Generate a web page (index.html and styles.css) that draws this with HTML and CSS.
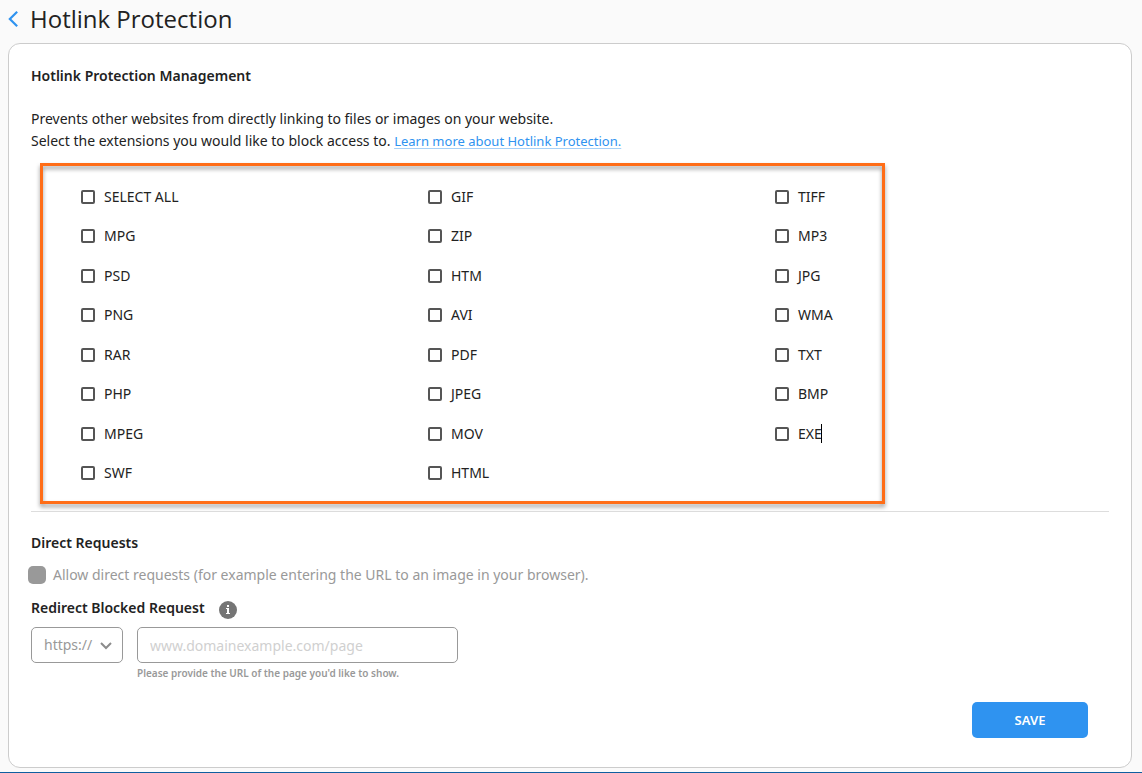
FILE: index.html
```
<!DOCTYPE html>
<html lang="en">
<head>
    <meta charset="UTF-8">
    <meta name="viewport" content="width=device-width, initial-scale=1.0">
    <title>Hotlink Protection</title>
    <link rel="stylesheet" href="styles.css">
</head>
<body>
    <header class="page-header">
        <a href="#" class="back-link" aria-label="Back">
            <svg width="12" height="18" viewBox="0 0 12 18" fill="none" stroke="#2f93f0" stroke-width="2.4">
                <path d="M10 1L2 9L10 17"/>
            </svg>
        </a>
        <h1>Hotlink Protection</h1>
    </header>

    <main class="card">
        <h2>Hotlink Protection Management</h2>
        <p class="intro">
            Prevents other websites from directly linking to files or images on your website.<br>
            Select the extensions you would like to block access to.
            <a href="#" class="learn-more">Learn more about Hotlink Protection.</a>
        </p>

        <div class="extensions">
            <div class="extension-grid">
                <label><input type="checkbox"> SELECT ALL</label>
                <label><input type="checkbox"> GIF</label>
                <label><input type="checkbox"> TIFF</label>
                <label><input type="checkbox"> MPG</label>
                <label><input type="checkbox"> ZIP</label>
                <label><input type="checkbox"> MP3</label>
                <label><input type="checkbox"> PSD</label>
                <label><input type="checkbox"> HTM</label>
                <label><input type="checkbox"> JPG</label>
                <label><input type="checkbox"> PNG</label>
                <label><input type="checkbox"> AVI</label>
                <label><input type="checkbox"> WMA</label>
                <label><input type="checkbox"> RAR</label>
                <label><input type="checkbox"> PDF</label>
                <label><input type="checkbox"> TXT</label>
                <label><input type="checkbox"> PHP</label>
                <label><input type="checkbox"> JPEG</label>
                <label><input type="checkbox"> BMP</label>
                <label><input type="checkbox"> MPEG</label>
                <label><input type="checkbox"> MOV</label>
                <label><input type="checkbox"> <span class="with-caret">EXE</span></label>
                <label><input type="checkbox"> SWF</label>
                <label><input type="checkbox"> HTML</label>
            </div>
            <div class="highlight"></div>
        </div>

        <section class="requests">
            <h2>Direct Requests</h2>
            <label class="direct">
                <input type="checkbox" disabled>
                Allow direct requests (for example entering the URL to an image in your browser).
            </label>

            <div class="redirect-title">
                <h2>Redirect Blocked Request</h2>
                <svg width="18" height="18" viewBox="0 0 18 18">
                    <circle cx="9" cy="9" r="9" fill="#757575"/>
                    <path d="M8 4h2v2H8zM7 7h3v5h1v1H7v-1h1V8H7z" fill="#fff"/>
                </svg>
            </div>

            <div class="redirect-row">
                <div class="protocol">
                    <select aria-label="Protocol" disabled>
                        <option>https://</option>
                    </select>
                    <svg width="12" height="8" viewBox="0 0 12 8" fill="none" stroke="#8c8c8c" stroke-width="2">
                        <path d="M1 1L6 6L11 1"/>
                    </svg>
                </div>
                <div class="url-field">
                    <input type="text" aria-label="Redirect URL" aria-describedby="urlHint" placeholder="www.domainexample.com/page" disabled>
                    <p id="urlHint">Please provide the URL of the page you'd like to show.</p>
                </div>
            </div>
        </section>

        <div class="actions">
            <button type="submit">SAVE</button>
        </div>
    </main>
</body>
</html>
```
FILE: styles.css
```
* {
    margin: 0;
    padding: 0;
    box-sizing: border-box;
}

body {
    min-height: 100vh;
    display: flex;
    flex-direction: column;
    background-color: #fafafa;
    border-bottom: 1px solid #0f5fa0;
    color: #222;
    font-family: 'Noto Sans', 'Open Sans', sans-serif;
    font-size: 14px;
    line-height: 22px;
}

input,
select,
button {
    font: inherit;
}

.page-header {
    display: flex;
    align-items: center;
    gap: 11px;
    height: 43px;
    padding: 0 8px 5px;
}

.back-link {
    display: flex;
    width: 11px;
}

h1 {
    font-family: 'Open Sans', sans-serif;
    font-size: 24px;
    font-weight: 400;
    line-height: 32px;
}

h2 {
    font-size: 14px;
    font-weight: 600;
    line-height: 22px;
}

.card {
    flex: 1;
    display: flex;
    flex-direction: column;
    margin: 0 10px 4px 8px;
    padding: 21px 22px 29px;
    background-color: #fff;
    border: 1px solid #ccc;
    border-radius: 12px;
}

.intro {
    margin-top: 21px;
}

.learn-more {
    color: #2f93f0;
    font-size: 13px;
    text-decoration-color: #a5d0f8;
    text-underline-offset: 2px;
}

.extensions {
    position: relative;
    padding: 25px 0 18px 37px;
    border-bottom: 1px solid #ddd;
}

.extension-grid {
    display: grid;
    grid-template-columns: repeat(3, 1fr);
    grid-auto-rows: 1fr;
    height: 316px;
}

.extension-grid label {
    display: flex;
    align-items: center;
    gap: 9px;
    padding-left: 13px;
}

.extension-grid input {
    appearance: none;
    width: 14px;
    height: 14px;
    border: 2px solid #555;
    border-radius: 2px;
    background-color: #fff;
}

.extension-grid input:checked {
    background-color: #555;
}

.with-caret {
    position: relative;
}

.with-caret::after {
    content: "";
    position: absolute;
    top: 1px;
    right: 0;
    width: 1px;
    height: 19px;
    background-color: #000;
}

.highlight {
    position: absolute;
    top: 11px;
    left: 9px;
    right: 224px;
    bottom: 7px;
    border: 3px solid #ff6d17;
    filter: drop-shadow(0 3px 2px rgba(0, 0, 0, 0.4));
    pointer-events: none;
}

.requests {
    padding-top: 20px;
}

.direct {
    display: flex;
    align-items: center;
    gap: 7px;
    margin: 10px 0 11px -3px;
    color: #999;
}

.direct input {
    appearance: none;
    width: 18px;
    height: 18px;
    border-radius: 5px;
    background-color: #999;
}

.redirect-title {
    display: flex;
    align-items: flex-end;
    gap: 14px;
}

.redirect-row {
    display: flex;
    align-items: flex-start;
    gap: 14px;
    margin-top: 8px;
}

.protocol {
    position: relative;
}

.protocol select {
    appearance: none;
    width: 92px;
    height: 36px;
    padding: 0 12px;
    border: 1px solid #999;
    border-radius: 5px;
    background-color: #fff;
    color: #999;
    opacity: 1;
}

.protocol svg {
    position: absolute;
    top: 15px;
    right: 11px;
    pointer-events: none;
}

.url-field input {
    display: block;
    width: 321px;
    height: 36px;
    padding: 0 12px;
    border: 1px solid #999;
    border-radius: 5px;
    background-color: #fff;
}

.url-field input::placeholder {
    color: #d0d0d0;
}

.url-field p {
    margin-top: 2px;
    color: #999;
    font-size: 10px;
    font-weight: 600;
    line-height: 16px;
}

.actions {
    display: flex;
    justify-content: flex-end;
    margin-top: auto;
    padding-right: 21px;
}

.actions button {
    width: 116px;
    height: 36px;
    border: none;
    border-radius: 5px;
    background-color: #2f93f0;
    color: #fff;
    font-size: 13px;
    font-weight: 600;
    cursor: pointer;
}
```
